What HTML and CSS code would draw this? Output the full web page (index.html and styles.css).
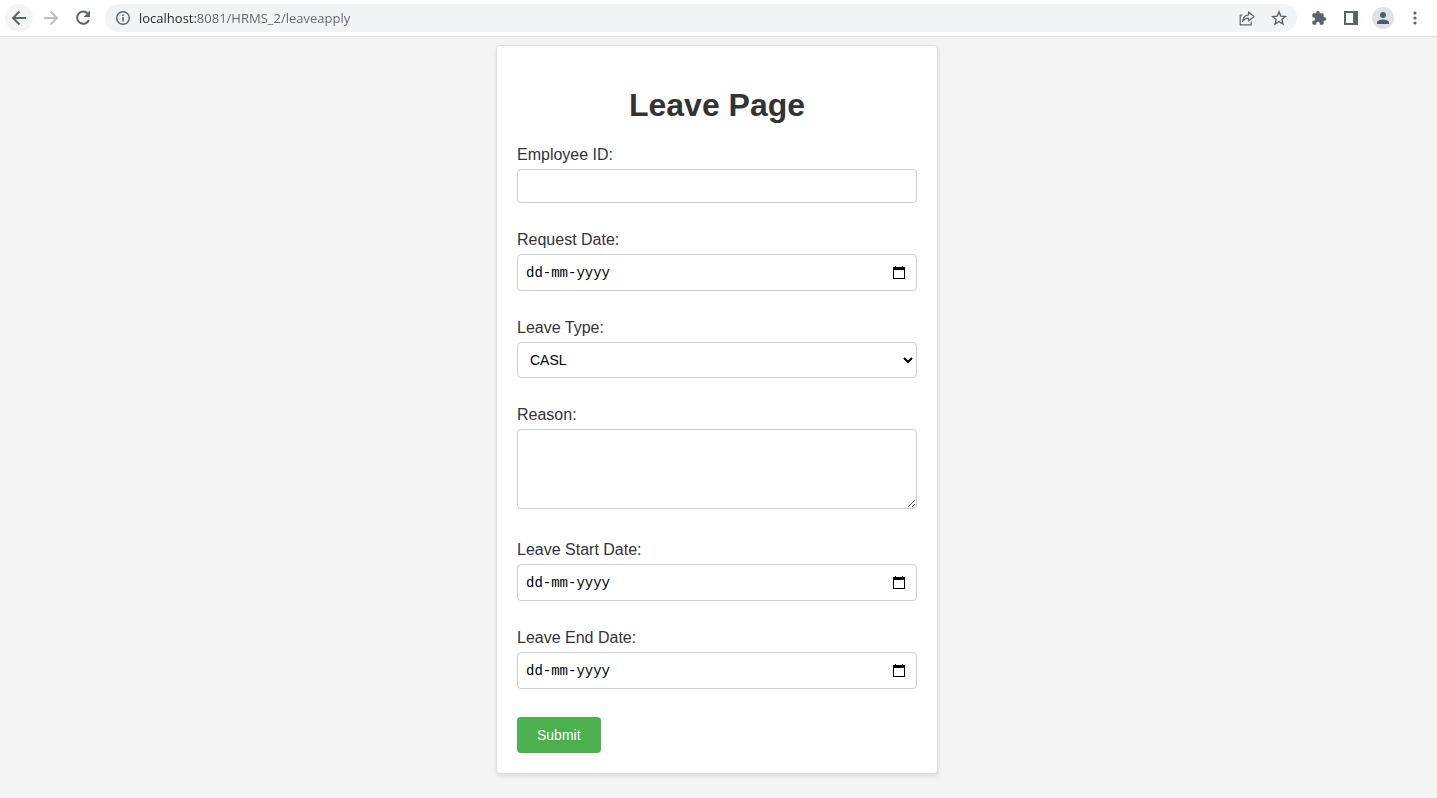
FILE: index.html
```html
<!DOCTYPE html>
<html lang="en">
<head>
<meta charset="utf-8">
<meta name="viewport" content="width=device-width, initial-scale=1">
<title>Leave Page</title>
<link rel="stylesheet" href="styles.css">
</head>
<body>
<header class="toolbar">
  <nav class="nav" aria-label="Browser navigation">
    <button class="tool tool-active" type="button" aria-label="Back">
      <svg width="20" height="20" viewBox="0 0 20 20" fill="none" stroke="currentColor" stroke-width="2"><path d="M17 10H4M10.500 3.500L4 10l6.500 6.500"/></svg>
    </button>
    <button class="tool tool-muted" type="button" aria-label="Forward">
      <svg width="20" height="20" viewBox="0 0 20 20" fill="none" stroke="currentColor" stroke-width="2"><path d="M3 10h13M9.500 3.500L16 10l-6.500 6.500"/></svg>
    </button>
    <button class="tool" type="button" aria-label="Reload">
      <svg width="20" height="20" viewBox="0 0 20 20"><path d="M14.600 5.400A6.100 6.100 0 1 0 15.900 12" fill="none" stroke="currentColor" stroke-width="2"/><path d="M17 2.600V9h-6.400z" fill="currentColor"/></svg>
    </button>
  </nav>
  <div class="address">
    <svg class="info" width="16" height="16" viewBox="0 0 16 16"><circle cx="8" cy="8" r="6.300" fill="none" stroke="currentColor" stroke-width="1.400"/><path d="M7.200 7h1.600v4.400H7.200zM7.200 4.500h1.600V6H7.200z" fill="currentColor"/></svg>
    <input class="url" type="text" aria-label="Address" value="localhost:8081/HRMS_2/leaveapply">
    <button class="tool" type="button" aria-label="Share">
      <svg width="18" height="18" viewBox="0 0 18 18" fill="none" stroke="currentColor" stroke-width="1.200" stroke-linejoin="round"><path d="M4.500 6H2.200v9.800h11v-3.200"/><path d="M10.500 3v2.900C6.800 6.300 5 8.800 4.500 12.500c1.500-2.200 3.300-3.200 6-3.300V12L16 7.500z"/></svg>
    </button>
    <button class="tool" type="button" aria-label="Bookmark">
      <svg width="18" height="18" viewBox="0 0 18 18" fill="none" stroke="currentColor" stroke-width="1.400"><path d="M9 2.900l1.800 4.200 4.600.4-3.500 3 1.100 4.500L9 12.600 5 15l1.100-4.500-3.500-3 4.600-.4z"/></svg>
    </button>
  </div>
  <div class="extras">
    <button class="tool" type="button" aria-label="Extensions">
      <svg width="16" height="16" viewBox="0 0 24 24" fill="currentColor"><path d="M20.500 11H19V7c0-1.100-.9-2-2-2h-4V3.500a2.500 2.500 0 0 0-5 0V5H4c-1.100 0-2 .9-2 2v3.800h1.500a2.700 2.700 0 0 1 0 5.400H2V20c0 1.100.9 2 2 2h3.800v-1.500a2.700 2.700 0 0 1 5.400 0V22H17c1.100 0 2-.9 2-2v-4h1.500a2.500 2.500 0 0 0 0-5z"/></svg>
    </button>
    <button class="tool" type="button" aria-label="Side panel">
      <svg width="14" height="14" viewBox="0 0 14 14"><path fill="currentColor" fill-rule="evenodd" d="M0 0h14v14H0zM2 2v10h7V2z"/></svg>
    </button>
    <button class="tool" type="button" aria-label="Profile">
      <svg width="22" height="22" viewBox="0 0 22 22"><circle cx="11" cy="11" r="11" fill="#dee1e6"/><circle cx="11" cy="8" r="3" fill="#4f5b70"/><path d="M5 17v-1.500C5 13.400 8.500 12.500 11 12.500s6 .9 6 3V17z" fill="#4f5b70"/></svg>
    </button>
    <button class="tool" type="button" aria-label="Menu">
      <svg width="16" height="16" viewBox="0 0 16 16" fill="currentColor"><circle cx="8" cy="3" r="1.600"/><circle cx="8" cy="8" r="1.600"/><circle cx="8" cy="13" r="1.600"/></svg>
    </button>
  </div>
</header>
<main class="page">
  <form class="card">
    <h1 class="title">Leave Page</h1>
    <div class="field">
      <label for="employee">Employee ID:</label>
      <input class="control" id="employee" type="text">
    </div>
    <div class="field">
      <label for="request">Request Date:</label>
      <div class="control date">
        <input class="date-text" id="request" type="text" placeholder="dd-mm-yyyy">
        <button class="picker" type="button" aria-label="Choose request date"><svg width="12" height="13" viewBox="0 0 12 13"><path fill="currentColor" fill-rule="evenodd" d="M2 0h1v1h6V0h1v1h2v12H0V1h2zM1 4v8h10V4z"/></svg></button>
      </div>
    </div>
    <div class="field">
      <label for="type">Leave Type:</label>
      <select class="control select" id="type"><option>CASL</option></select>
    </div>
    <div class="field field-area">
      <label for="reason">Reason:</label>
      <textarea class="control area" id="reason"></textarea>
    </div>
    <div class="field">
      <label for="start">Leave Start Date:</label>
      <div class="control date">
        <input class="date-text" id="start" type="text" placeholder="dd-mm-yyyy">
        <button class="picker" type="button" aria-label="Choose start date"><svg width="12" height="13" viewBox="0 0 12 13"><path fill="currentColor" fill-rule="evenodd" d="M2 0h1v1h6V0h1v1h2v12H0V1h2zM1 4v8h10V4z"/></svg></button>
      </div>
    </div>
    <div class="field">
      <label for="end">Leave End Date:</label>
      <div class="control date">
        <input class="date-text" id="end" type="text" placeholder="dd-mm-yyyy">
        <button class="picker" type="button" aria-label="Choose end date"><svg width="12" height="13" viewBox="0 0 12 13"><path fill="currentColor" fill-rule="evenodd" d="M2 0h1v1h6V0h1v1h2v12H0V1h2zM1 4v8h10V4z"/></svg></button>
      </div>
    </div>
    <button class="submit" type="submit">Submit</button>
  </form>
</main>
</body>
</html>
```
FILE: styles.css
```css
* {
  box-sizing: border-box;
}

body {
  margin: 0;
  background: #f4f4f4;
  color: #333;
  font: 16px/20px "Liberation Sans", Arial, sans-serif;
}

button {
  border: 0;
  cursor: pointer;
}

.toolbar {
  display: flex;
  align-items: center;
  gap: 8px;
  padding: 4px 8px 4px 5px;
  background: #fff;
  border-bottom: 1px solid #dadce0;
}

.nav,
.extras {
  display: flex;
  gap: 4px;
}

.tool {
  display: grid;
  place-items: center;
  flex: none;
  width: 28px;
  height: 28px;
  padding: 0;
  border-radius: 50%;
  background: none;
  color: #5f6368;
}

.tool-active {
  background: #f4f4f4;
}

.tool-muted {
  color: #babcbe;
}

.address {
  display: flex;
  flex: 1;
  align-items: center;
  gap: 4px;
  height: 28px;
  padding: 0 4px 0 10px;
  border-radius: 14px;
  background: #f1f3f4;
}

.info {
  flex: none;
  color: #5f6368;
}

.url {
  flex: 1;
  min-width: 0;
  height: 28px;
  padding: 0 0 0 4px;
  border: 0;
  outline: 0;
  background: linear-gradient(90deg, #202124 61px, #5f6368 61px);
  background-clip: text;
  -webkit-background-clip: text;
  color: transparent;
  font: 13px/18px "Open Sans", "Noto Sans", sans-serif;
}

.page {
  padding: 8px 3px 24px 0;
}

.card {
  max-width: 442px;
  margin: 0 auto;
  padding: 20px;
  border: 1px solid #ddd;
  border-radius: 4px;
  background: #fff;
  box-shadow: 0 2px 4px rgba(0, 0, 0, 0.1);
}

.title {
  margin: 21px 0;
  font-size: 32px;
  line-height: 37px;
  text-align: center;
}

.field {
  display: flex;
  flex-direction: column;
  gap: 4px;
  margin-bottom: 27px;
}

.field-area {
  margin-bottom: 31px;
}

.control {
  width: 100%;
  height: 34px;
  padding: 8px;
  border: 1px solid #ccc;
  border-radius: 4px;
  background: #fff;
  color: #000;
  font: 14px/16px "Liberation Sans", Arial, sans-serif;
}

.date {
  display: flex;
  align-items: center;
  height: 37px;
}

.date-text {
  flex: 1;
  min-width: 0;
  padding: 0;
  border: 0;
  outline: 0;
  color: #000;
  font: 14px/18px "Liberation Mono", monospace;
}

.date-text::placeholder {
  color: #000;
  opacity: 1;
}

.picker {
  display: grid;
  place-items: center;
  width: 18px;
  height: 20px;
  padding: 0;
  background: none;
  color: #000;
}

.select {
  height: 36px;
}

.area {
  height: 80px;
  resize: vertical;
}

.submit {
  display: block;
  margin-top: 28px;
  padding: 10px 20px;
  border-radius: 4px;
  background: #4caf50;
  color: #fff;
  font: 14px/16px "Liberation Sans", Arial, sans-serif;
}
```
